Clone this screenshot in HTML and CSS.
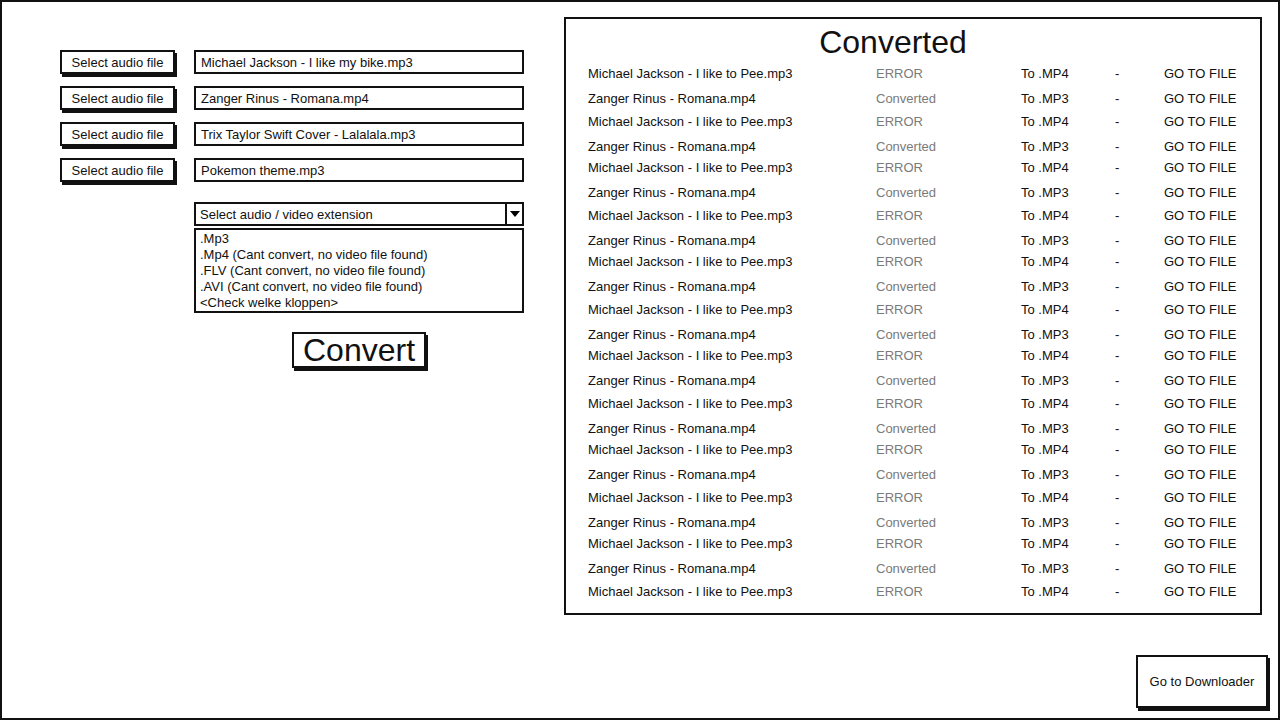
FILE: index.html
```html
<!DOCTYPE html>
<html>
<head>
<meta charset="utf-8">
<link rel="stylesheet" href="styles.css">
</head>
<body>
<div class="frame">
  <div class="top">
    <div class="left">
      <div class="files">
        <div class="file-row"><div class="btn select-btn">Select audio file</div><div class="file-input">Michael Jackson - I like my bike.mp3</div></div>
        <div class="file-row"><div class="btn select-btn">Select audio file</div><div class="file-input">Zanger Rinus - Romana.mp4</div></div>
        <div class="file-row"><div class="btn select-btn">Select audio file</div><div class="file-input">Trix Taylor Swift Cover - Lalalala.mp3</div></div>
        <div class="file-row"><div class="btn select-btn">Select audio file</div><div class="file-input">Pokemon theme.mp3</div></div>
      </div>
      <div class="ext">
        <div class="select">
          <span class="select-label">Select audio / video extension</span>
          <span class="arrow"><svg width="10" height="6" viewBox="0 0 10 6"><path d="M0 0 L10 0 L5 6 Z" fill="#000"/></svg></span>
        </div>
        <div class="list">
          <div>.Mp3</div>
          <div>.Mp4 (Cant convert, no video file found)</div>
          <div>.FLV (Cant convert, no video file found)</div>
          <div>.AVI (Cant convert, no video file found)</div>
          <div>&lt;Check welke kloppen&gt;</div>
        </div>
        <div class="btn convert">Convert</div>
      </div>
    </div>
    <div class="panel">
      <div class="title">Converted</div>
      <div class="rows">
        <div class="row"><span>Michael Jackson - I like to Pee.mp3</span><span class="status">ERROR</span><span>To .MP4</span><span>-</span><span>GO TO FILE</span></div>
        <div class="row"><span>Zanger Rinus - Romana.mp4</span><span class="status">Converted</span><span>To .MP3</span><span>-</span><span>GO TO FILE</span></div>
        <div class="row"><span>Michael Jackson - I like to Pee.mp3</span><span class="status">ERROR</span><span>To .MP4</span><span>-</span><span>GO TO FILE</span></div>
        <div class="row"><span>Zanger Rinus - Romana.mp4</span><span class="status">Converted</span><span>To .MP3</span><span>-</span><span>GO TO FILE</span></div>
        <div class="row"><span>Michael Jackson - I like to Pee.mp3</span><span class="status">ERROR</span><span>To .MP4</span><span>-</span><span>GO TO FILE</span></div>
        <div class="row"><span>Zanger Rinus - Romana.mp4</span><span class="status">Converted</span><span>To .MP3</span><span>-</span><span>GO TO FILE</span></div>
        <div class="row"><span>Michael Jackson - I like to Pee.mp3</span><span class="status">ERROR</span><span>To .MP4</span><span>-</span><span>GO TO FILE</span></div>
        <div class="row"><span>Zanger Rinus - Romana.mp4</span><span class="status">Converted</span><span>To .MP3</span><span>-</span><span>GO TO FILE</span></div>
        <div class="row"><span>Michael Jackson - I like to Pee.mp3</span><span class="status">ERROR</span><span>To .MP4</span><span>-</span><span>GO TO FILE</span></div>
        <div class="row"><span>Zanger Rinus - Romana.mp4</span><span class="status">Converted</span><span>To .MP3</span><span>-</span><span>GO TO FILE</span></div>
        <div class="row"><span>Michael Jackson - I like to Pee.mp3</span><span class="status">ERROR</span><span>To .MP4</span><span>-</span><span>GO TO FILE</span></div>
        <div class="row"><span>Zanger Rinus - Romana.mp4</span><span class="status">Converted</span><span>To .MP3</span><span>-</span><span>GO TO FILE</span></div>
        <div class="row"><span>Michael Jackson - I like to Pee.mp3</span><span class="status">ERROR</span><span>To .MP4</span><span>-</span><span>GO TO FILE</span></div>
        <div class="row"><span>Zanger Rinus - Romana.mp4</span><span class="status">Converted</span><span>To .MP3</span><span>-</span><span>GO TO FILE</span></div>
        <div class="row"><span>Michael Jackson - I like to Pee.mp3</span><span class="status">ERROR</span><span>To .MP4</span><span>-</span><span>GO TO FILE</span></div>
        <div class="row"><span>Zanger Rinus - Romana.mp4</span><span class="status">Converted</span><span>To .MP3</span><span>-</span><span>GO TO FILE</span></div>
        <div class="row"><span>Michael Jackson - I like to Pee.mp3</span><span class="status">ERROR</span><span>To .MP4</span><span>-</span><span>GO TO FILE</span></div>
        <div class="row"><span>Zanger Rinus - Romana.mp4</span><span class="status">Converted</span><span>To .MP3</span><span>-</span><span>GO TO FILE</span></div>
        <div class="row"><span>Michael Jackson - I like to Pee.mp3</span><span class="status">ERROR</span><span>To .MP4</span><span>-</span><span>GO TO FILE</span></div>
        <div class="row"><span>Zanger Rinus - Romana.mp4</span><span class="status">Converted</span><span>To .MP3</span><span>-</span><span>GO TO FILE</span></div>
        <div class="row"><span>Michael Jackson - I like to Pee.mp3</span><span class="status">ERROR</span><span>To .MP4</span><span>-</span><span>GO TO FILE</span></div>
        <div class="row"><span>Zanger Rinus - Romana.mp4</span><span class="status">Converted</span><span>To .MP3</span><span>-</span><span>GO TO FILE</span></div>
        <div class="row"><span>Michael Jackson - I like to Pee.mp3</span><span class="status">ERROR</span><span>To .MP4</span><span>-</span><span>GO TO FILE</span></div>
      </div>
    </div>
  </div>
  <div class="footer">
    <div class="btn downloader">Go to Downloader</div>
  </div>
</div>
</body>
</html>
```

FILE: styles.css
```css
* { box-sizing: border-box; }
html, body { margin: 0; padding: 0; background: #fff; }
body {
  font-family: "Liberation Sans", Arial, sans-serif;
  color: #111;
  font-size: 13px;
}
.frame {
  width: 1280px;
  height: 720px;
  border: 2px solid #111;
  display: flex;
  flex-direction: column;
}
.top {
  display: flex;
  padding-top: 15px;
}
.left {
  width: 464px;
  margin-left: 58px;
  margin-top: 33px;
  display: flex;
  flex-direction: column;
}
.files {
  display: flex;
  flex-direction: column;
  gap: 12px;
}
.file-row {
  display: flex;
  gap: 19px;
  height: 24px;
}
.btn {
  border: 2px solid #111;
  box-shadow: 2px 3px 0 #111;
  background: #fff;
  display: flex;
  align-items: center;
  justify-content: center;
}
.select-btn {
  width: 115px;
  height: 24px;
}
.file-input {
  width: 330px;
  height: 24px;
  border: 2px solid #111;
  padding-left: 5px;
  display: flex;
  align-items: center;
}
.ext {
  margin-left: 134px;
  margin-top: 20px;
  width: 330px;
  display: flex;
  flex-direction: column;
}
.select {
  height: 24px;
  border: 2px solid #111;
  display: flex;
  align-items: center;
}
.select-label {
  flex: 1;
  padding-left: 4px;
}
.arrow {
  width: 17px;
  height: 100%;
  border-left: 2px solid #111;
  display: flex;
  align-items: center;
  justify-content: center;
}
.list {
  margin-top: 2px;
  height: 85px;
  border: 2px solid #111;
  padding: 1px 4px 0;
  line-height: 16px;
}
.convert {
  align-self: center;
  margin-top: 19px;
  width: 134px;
  height: 36px;
  font-size: 32px;
  line-height: 32px;
}
.panel {
  margin-left: 40px;
  width: 698px;
  height: 598px;
  border: 2px solid #111;
  padding: 4px 0 0 22px;
}
.title {
  text-align: center;
  font-size: 32px;
  line-height: 38px;
  padding-right: 62px;
  margin-bottom: 5px;
}
.row {
  display: grid;
  grid-template-columns: 288px 145px 94px 49px auto;
  line-height: 16px;
  height: 25px;
}
.row:nth-child(4n+2) { height: 23px; }
.row:nth-child(4n) { height: 21px; }
.status { color: #7a7a7a; }
.footer {
  display: flex;
  justify-content: flex-end;
  padding-right: 10px;
  margin-top: 40px;
}
.downloader {
  width: 132px;
  height: 53px;
}
```
